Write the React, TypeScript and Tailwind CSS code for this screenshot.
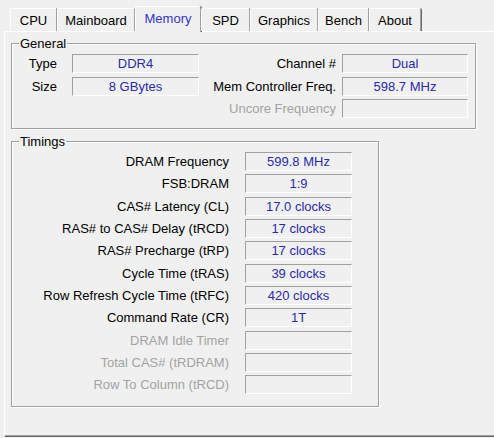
import React from "react";

const tabs = [
  { name: "CPU", w: "w-[47px]" },
  { name: "Mainboard", w: "w-[78px]" },
  { name: "Memory", w: "w-[66px]", sel: true },
  { name: "SPD", w: "w-[49px]" },
  { name: "Graphics", w: "w-[68px]" },
  { name: "Bench", w: "w-[51px]" },
  { name: "About", w: "w-[52px]" },
];

function Field({ value }: { value?: string }) {
  return (
    <div className="h-[19px] border border-t-[#a0a0a0] border-l-[#a0a0a0] border-b-white border-r-white text-center leading-[17px] text-[#2a2aa8] whitespace-nowrap">
      {value ?? ""}
    </div>
  );
}

function Label({ text, disabled }: { text: string; disabled?: boolean }) {
  return (
    <div
      className={
        disabled
          ? "h-[19px] leading-[19px] text-right whitespace-nowrap text-[#a3a3a3]"
          : "h-[19px] leading-[19px] text-right whitespace-nowrap text-black"
      }
    >
      {text}
    </div>
  );
}

const timings: { label: string; value?: string; disabled?: boolean }[] = [
  { label: "DRAM Frequency", value: "599.8 MHz" },
  { label: "FSB:DRAM", value: "1:9" },
  { label: "CAS# Latency (CL)", value: "17.0 clocks" },
  { label: "RAS# to CAS# Delay (tRCD)", value: "17 clocks" },
  { label: "RAS# Precharge (tRP)", value: "17 clocks" },
  { label: "Cycle Time (tRAS)", value: "39 clocks" },
  { label: "Row Refresh Cycle Time (tRFC)", value: "420 clocks" },
  { label: "Command Rate (CR)", value: "1T" },
  { label: "DRAM Idle Timer", disabled: true },
  { label: "Total CAS# (tRDRAM)", disabled: true },
  { label: "Row To Column (tRCD)", disabled: true },
];

export default function App() {
  return (
    <div
      className="w-[494px] h-[438px] bg-[#f0f0f0] overflow-hidden pt-[6px] text-[13px] text-black"
      style={{ fontFamily: '"Liberation Sans", Arial, sans-serif' }}
    >
      {/* tab strip */}
      <div className="flex items-end h-[26px] pl-[10px] -mb-[1px] relative z-10">
        {tabs.map((t) =>
          t.sel ? (
            <div
              key={t.name}
              className={`${t.w} h-[26px] bg-[#f0f0f0] border-t border-l border-r border-t-white border-l-white border-r-[#a0a0a0] shadow-[1px_0_0_#696969] rounded-t-[2px] flex justify-center pt-[4px] text-[#3333cc] leading-[15px]`}
            >
              {t.name}
            </div>
          ) : (
            <div
              key={t.name}
              className={`${t.w} h-[23px] mb-[1px] border-t border-l border-r border-t-white border-l-white border-r-[#a0a0a0] shadow-[1px_0_0_#696969] rounded-t-[2px] flex justify-center pt-[4px] leading-[15px]`}
            >
              {t.name}
            </div>
          )
        )}
      </div>

      {/* panel */}
      <div className="ml-[4px] w-[500px] h-[406px] border-t border-l border-b border-t-white border-l-white border-b-[#696969] shadow-[inset_0_-1px_0_#a0a0a0] pl-[6px]">
        {/* General */}
        <fieldset className="mt-[4px] w-[465px] border border-[#a0a0a0] shadow-[inset_1px_1px_0_#fff,1px_1px_0_#fff] pt-[3px] pb-[10px]">
          <legend className="ml-[7px] px-[1px] leading-[15px] bg-[#f0f0f0]">General</legend>
          <div className="flex flex-col gap-[3.5px]">
            <div className="flex">
              <div className="w-[45px]">
                <Label text="Type" />
              </div>
              <div className="w-[127px] ml-[15px]">
                <Field value="DDR4" />
              </div>
              <div className="w-[137px]">
                <Label text="Channel #" />
              </div>
              <div className="w-[126px] ml-[6px]">
                <Field value="Dual" />
              </div>
            </div>
            <div className="flex">
              <div className="w-[45px]">
                <Label text="Size" />
              </div>
              <div className="w-[127px] ml-[15px]">
                <Field value="8 GBytes" />
              </div>
              <div className="w-[137px]">
                <Label text="Mem Controller Freq." />
              </div>
              <div className="w-[126px] ml-[6px]">
                <Field value="598.7 MHz" />
              </div>
            </div>
            <div className="flex">
              <div className="w-[45px]" />
              <div className="w-[127px] ml-[15px]" />
              <div className="w-[137px]">
                <Label text="Uncore Frequency" disabled />
              </div>
              <div className="w-[126px] ml-[6px]">
                <Field />
              </div>
            </div>
          </div>
        </fieldset>

        {/* Timings */}
        <fieldset className="mt-[5px] w-[368px] border border-[#a0a0a0] shadow-[inset_1px_1px_0_#fff,1px_1px_0_#fff] pt-[3px] pb-[12px]">
          <legend className="ml-[7px] px-[1px] leading-[15px] bg-[#f0f0f0]">Timings</legend>
          <div className="flex flex-col gap-[3.34px]">
            {timings.map((r) => (
              <div key={r.label} className="flex">
                <div className="w-[217px]">
                  <Label text={r.label} disabled={r.disabled} />
                </div>
                <div className="w-[107px] ml-[16px]">
                  <Field value={r.value} />
                </div>
              </div>
            ))}
          </div>
        </fieldset>
      </div>
    </div>
  );
}
